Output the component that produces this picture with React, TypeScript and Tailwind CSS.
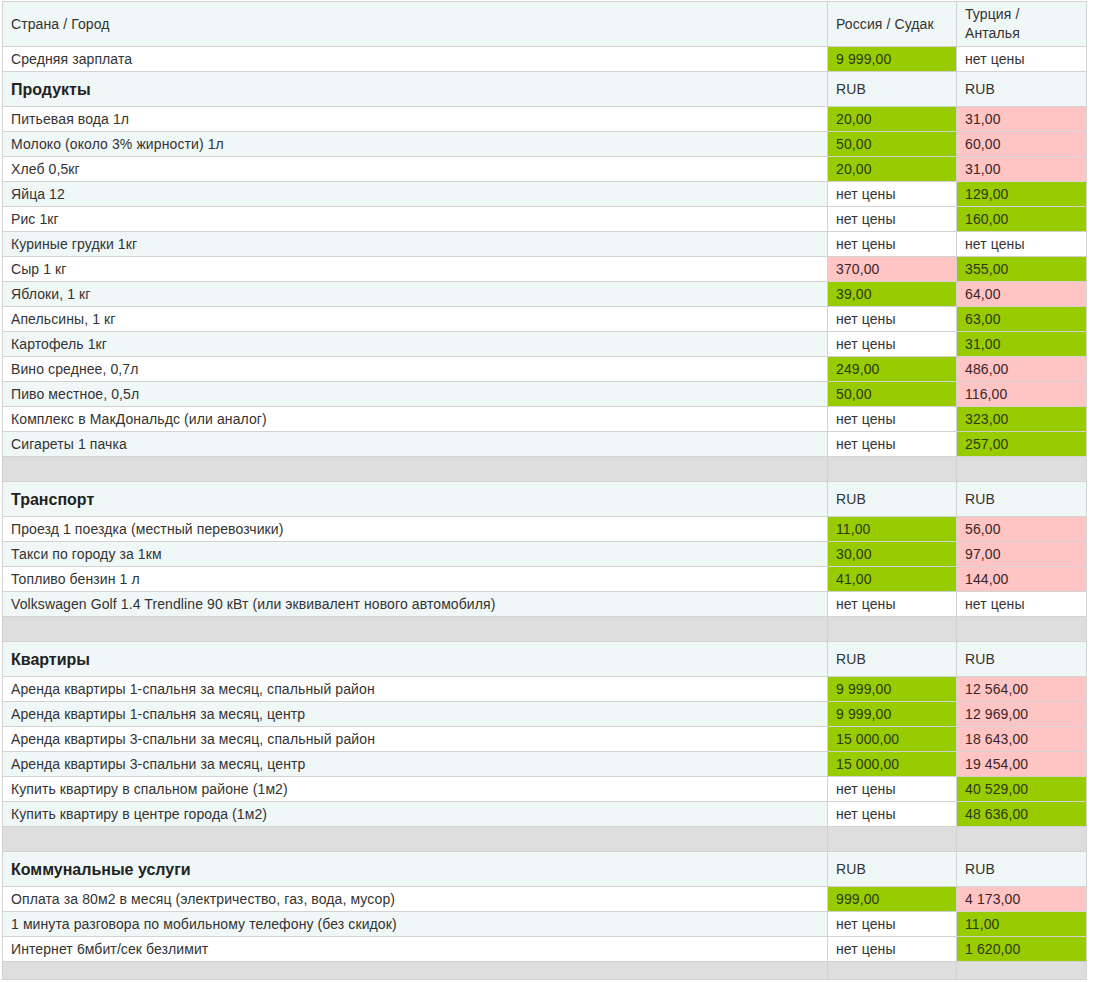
type Tone = "g" | "p" | "n";
type Item = { name: string; a: string; at: Tone; b: string; bt: Tone };
type Section = { title: string; items: Item[] };

const NO = "нет цены";

const SECTIONS: Section[] = [
  {
    title: "Продукты",
    items: [
      { name: "Питьевая вода 1л", a: "20,00", at: "g", b: "31,00", bt: "p" },
      { name: "Молоко (около 3% жирности) 1л", a: "50,00", at: "g", b: "60,00", bt: "p" },
      { name: "Хлеб 0,5кг", a: "20,00", at: "g", b: "31,00", bt: "p" },
      { name: "Яйца 12", a: NO, at: "n", b: "129,00", bt: "g" },
      { name: "Рис 1кг", a: NO, at: "n", b: "160,00", bt: "g" },
      { name: "Куриные грудки 1кг", a: NO, at: "n", b: NO, bt: "n" },
      { name: "Сыр 1 кг", a: "370,00", at: "p", b: "355,00", bt: "g" },
      { name: "Яблоки, 1 кг", a: "39,00", at: "g", b: "64,00", bt: "p" },
      { name: "Апельсины, 1 кг", a: NO, at: "n", b: "63,00", bt: "g" },
      { name: "Картофель 1кг", a: NO, at: "n", b: "31,00", bt: "g" },
      { name: "Вино среднее, 0,7л", a: "249,00", at: "g", b: "486,00", bt: "p" },
      { name: "Пиво местное, 0,5л", a: "50,00", at: "g", b: "116,00", bt: "p" },
      { name: "Комплекс в МакДональдс (или аналог)", a: NO, at: "n", b: "323,00", bt: "g" },
      { name: "Сигареты 1 пачка", a: NO, at: "n", b: "257,00", bt: "g" },
    ],
  },
  {
    title: "Транспорт",
    items: [
      { name: "Проезд 1 поездка (местный перевозчики)", a: "11,00", at: "g", b: "56,00", bt: "p" },
      { name: "Такси по городу за 1км", a: "30,00", at: "g", b: "97,00", bt: "p" },
      { name: "Топливо бензин 1 л", a: "41,00", at: "g", b: "144,00", bt: "p" },
      {
        name: "Volkswagen Golf 1.4 Trendline 90 кВт (или эквивалент нового автомобиля)",
        a: NO,
        at: "n",
        b: NO,
        bt: "n",
      },
    ],
  },
  {
    title: "Квартиры",
    items: [
      { name: "Аренда квартиры 1-спальня за месяц, спальный район", a: "9 999,00", at: "g", b: "12 564,00", bt: "p" },
      { name: "Аренда квартиры 1-спальня за месяц, центр", a: "9 999,00", at: "g", b: "12 969,00", bt: "p" },
      { name: "Аренда квартиры 3-спальни за месяц, спальный район", a: "15 000,00", at: "g", b: "18 643,00", bt: "p" },
      { name: "Аренда квартиры 3-спальни за месяц, центр", a: "15 000,00", at: "g", b: "19 454,00", bt: "p" },
      { name: "Купить квартиру в спальном районе (1м2)", a: NO, at: "n", b: "40 529,00", bt: "g" },
      { name: "Купить квартиру в центре города (1м2)", a: NO, at: "n", b: "48 636,00", bt: "g" },
    ],
  },
  {
    title: "Коммунальные услуги",
    items: [
      { name: "Оплата за 80м2 в месяц (электричество, газ, вода, мусор)", a: "999,00", at: "g", b: "4 173,00", bt: "p" },
      { name: "1 минута разговора по мобильному телефону (без скидок)", a: NO, at: "n", b: "11,00", bt: "g" },
      { name: "Интернет 6мбит/сек безлимит", a: NO, at: "n", b: "1 620,00", bt: "g" },
    ],
  },
];

const TONE: Record<Tone, string> = {
  g: "bg-[#99cc00] text-[#2c3a12]",
  p: "bg-[#ffc4c4] text-[#3d2424]",
  n: "bg-white text-[#333]",
};

const cell = "border border-[#d2d2d2] px-2 py-0 align-middle";

function ValueCell({ value, tone }: { value: string; tone: Tone }) {
  return <td className={`${cell} ${TONE[tone]}`}>{value}</td>;
}

function Spacer({ last }: { last?: boolean }) {
  return (
    <tr className={last ? "h-[18px]" : "h-[25px]"}>
      <td className={`${cell} bg-[#dedede]`} />
      <td className={`${cell} bg-[#dedede]`} />
      <td className={`${cell} bg-[#dedede]`} />
    </tr>
  );
}

export default function App() {
  // even rows are tinted, odd rows white (spacer rows count too)
  let row = 1;
  const stripe = () => (row++ % 2 === 0 ? "bg-[#f0f7f7]" : "bg-white");

  return (
    <div className="bg-white pl-[2px] pt-[1px] font-['Liberation_Sans',Arial,sans-serif] text-[14px] leading-[17px] tracking-[0.1px] text-[#333]">
      <table className="w-[1084px] table-fixed border-collapse border border-[#bdbdbd]">
        <colgroup>
          <col className="w-[825px]" />
          <col className="w-[129px]" />
          <col className="w-[130px]" />
        </colgroup>
        <tbody>
          <tr className="h-[45px] bg-[#f0f7f7]">
            <td className={cell}>Страна / Город</td>
            <td className={cell}>Россия / Судак</td>
            <td className={`${cell} leading-[19px]`}>
              Турция /<br />
              Анталья
            </td>
          </tr>
          <tr className="h-[25px]">
            <td className={`${cell} ${stripe()}`}>Средняя зарплата</td>
            <ValueCell value="9 999,00" tone="g" />
            <ValueCell value={NO} tone="n" />
          </tr>
          {SECTIONS.map((section, si) => {
            const headStripe = stripe();
            const rows = [
              <tr key={`${section.title}-h`} className={`h-[35px] ${headStripe}`}>
                <td className={`${cell} text-[16px] font-bold tracking-normal text-[#222]`}>{section.title}</td>
                <td className={cell}>RUB</td>
                <td className={cell}>RUB</td>
              </tr>,
              ...section.items.map((item) => (
                <tr key={item.name} className="h-[25px]">
                  <td className={`${cell} ${stripe()}`}>{item.name}</td>
                  <ValueCell value={item.a} tone={item.at} />
                  <ValueCell value={item.b} tone={item.bt} />
                </tr>
              )),
              <Spacer key={`${section.title}-s`} last={si === SECTIONS.length - 1} />,
            ];
            row++;
            return rows;
          })}
        </tbody>
      </table>
    </div>
  );
}
